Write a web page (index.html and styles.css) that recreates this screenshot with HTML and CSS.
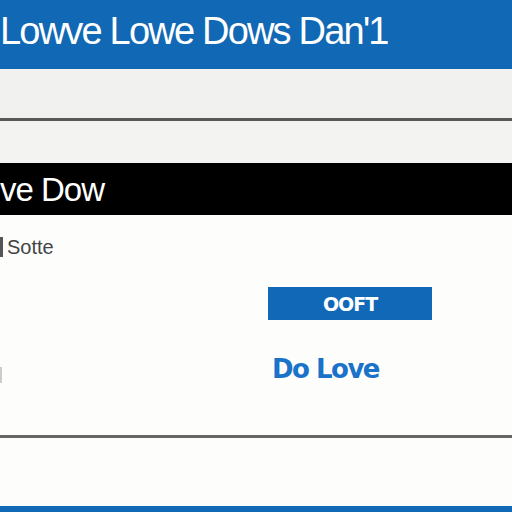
FILE: index.html
```html
<!DOCTYPE html>
<html lang="en">
<head>
	<meta charset="UTF-8">
	<title>Love Dow</title>
	<link rel="stylesheet" href="styles.css">
</head>
<body>
	<header class="cabecera">
		<h1>Lowve Lowe Dows Dan'1</h1>
	</header>
	<div class="banda"></div>
	<div class="banda banda2"></div>
	<div class="barra">
		<h2>ve Dow</h2>
	</div>
	<section class="panel">
		<p class="etiqueta">Sotte</p>
		<div class="fila">
			<span class="marca"></span>
			<div class="acciones">
				<button class="boton">OOFT</button>
				<a class="enlace" href="#">Do Love</a>
			</div>
		</div>
	</section>
	<div class="pie"></div>
</body>
</html>
```

FILE: styles.css
```css
*{
	margin:0;
	padding:0;
	box-sizing: border-box;
}
body{
	font-family: "Liberation Sans", Arial, sans-serif;
	background: #fdfdfc;
	width: 512px;
	height: 512px;
	overflow: hidden;
}
.cabecera{
	height: 69px;
	background: #1168b4;
	padding-top: 10px;
}
.cabecera h1{
	font-weight: normal;
	font-size: 38px;
	letter-spacing: -1.8px;
	color: #fff;
	white-space: nowrap;
}
.banda{
	height: 52px;
	background: #f1f1f0;
	border-bottom: 3px solid #585858;
}
.banda2{
	height: 42px;
	background: #f3f3f2;
	border-bottom: 0;
}
.barra{
	height: 52px;
	background: #000;
	padding-top: 8px;
}
.barra h2{
	font-weight: normal;
	font-size: 33px;
	color: #fff;
	letter-spacing: -1px;
}
.panel{
	height: 223px;
	background: #fdfdfc;
	border-bottom: 3px solid #666;
	padding-top: 22px;
}
.etiqueta{
	font-size: 20px;
	color: #444;
	border-left: 3px solid #555;
	padding-left: 4px;
	line-height: 20px;
}
.fila{
	display: flex;
	margin-top: 30px;
}
.marca{
	width: 2px;
	height: 16px;
	background: #ccc;
	margin-top: 80px;
}
.acciones{
	margin-left: 266px;
	display: flex;
	flex-direction: column;
}
.boton{
	width: 164px;
	height: 33px;
	border: none;
	background: #1168b6;
	color: #fff;
	font-family: "DejaVu Sans", sans-serif;
	font-weight: bold;
	font-size: 19px;
	letter-spacing: -1px;
}
.enlace{
	margin-top: 34px;
	margin-left: 4px;
	font-family: "DejaVu Sans", sans-serif;
	font-weight: bold;
	font-size: 26px;
	letter-spacing: -1.5px;
	color: #1a72c9;
	text-decoration: none;
}
.pie{
	height: 74px;
	background: #fdfdfc;
	border-bottom: 6px solid #1168b4;
}
```
